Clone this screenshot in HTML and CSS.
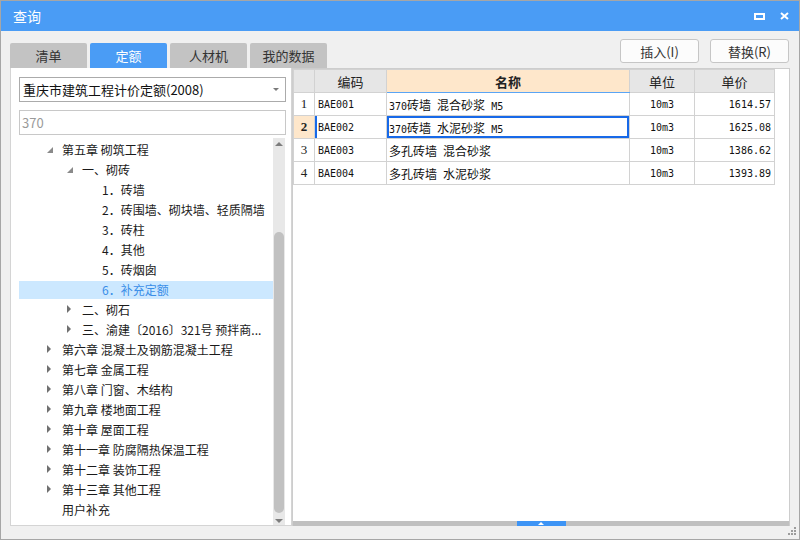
FILE: index.html
```html
<!DOCTYPE html>
<html lang="zh-CN">
<head>
<meta charset="utf-8">
<title>查询</title>
<link rel="stylesheet" href="styles.css">
</head>
<body>
<div class="window">
  <div class="titlebar">
    <span class="title">查询</span>
    <div class="win-btns">
      <svg class="ico-max" width="11" height="7" viewBox="0 0 11 7"><rect x="1" y="1" width="9" height="5" fill="none" stroke="#fff" stroke-width="2"/></svg>
      <svg class="ico-close" width="9" height="8" viewBox="0 0 9 8"><path d="M1 1L8 7M8 1L1 7" stroke="#fff" stroke-width="2" fill="none"/></svg>
    </div>
  </div>
  <div class="main">
    <div class="toprow">
      <div class="tabs">
        <div class="tab">清单</div>
        <div class="tab active">定额</div>
        <div class="tab">人材机</div>
        <div class="tab">我的数据</div>
      </div>
      <div class="actions">
        <button class="btn">插入(I)</button>
        <button class="btn">替换(R)</button>
      </div>
    </div>
    <div class="content">
      <div class="left">
        <div class="select"><span>重庆市建筑工程计价定额(2008)</span><span class="caret"></span></div>
        <div class="search">370</div>
        <div class="tree-wrap">
          <div class="tree">
            <div class="row l0"><span class="tog"><i class="open"></i></span>第五章 砌筑工程</div>
            <div class="row l1"><span class="tog"><i class="open"></i></span>一、砌砖</div>
            <div class="row l2"><span class="tog"></span>1．砖墙</div>
            <div class="row l2"><span class="tog"></span>2．砖围墙、砌块墙、轻质隔墙</div>
            <div class="row l2"><span class="tog"></span>3．砖柱</div>
            <div class="row l2"><span class="tog"></span>4．其他</div>
            <div class="row l2"><span class="tog"></span>5．砖烟囱</div>
            <div class="row l2 sel"><span class="tog"></span>6．补充定额</div>
            <div class="row l1"><span class="tog"><i class="closed"></i></span>二、砌石</div>
            <div class="row l1"><span class="tog"><i class="closed"></i></span>三、渝建〔2016〕321号 预拌商...</div>
            <div class="row l0"><span class="tog"><i class="closed"></i></span>第六章 混凝土及钢筋混凝土工程</div>
            <div class="row l0"><span class="tog"><i class="closed"></i></span>第七章 金属工程</div>
            <div class="row l0"><span class="tog"><i class="closed"></i></span>第八章 门窗、木结构</div>
            <div class="row l0"><span class="tog"><i class="closed"></i></span>第九章 楼地面工程</div>
            <div class="row l0"><span class="tog"><i class="closed"></i></span>第十章 屋面工程</div>
            <div class="row l0"><span class="tog"><i class="closed"></i></span>第十一章 防腐隔热保温工程</div>
            <div class="row l0"><span class="tog"><i class="closed"></i></span>第十二章 装饰工程</div>
            <div class="row l0"><span class="tog"><i class="closed"></i></span>第十三章 其他工程</div>
            <div class="row l0"><span class="tog"></span>用户补充</div>
          </div>
          <div class="vscroll">
            <span class="arrow-up"></span>
            <span class="thumb-v"></span>
            <span class="arrow-down"></span>
          </div>
        </div>
      </div>
      <div class="grid-panel">
        <table class="grid">
          <colgroup>
            <col class="c-rn"><col class="c-code"><col class="c-name"><col class="c-unit"><col class="c-price">
          </colgroup>
          <thead>
            <tr><th></th><th>编码</th><th class="name">名称</th><th>单位</th><th>单价</th></tr>
          </thead>
          <tbody>
            <tr><td class="rn">1</td><td class="code">BAE001</td><td class="nm"><span class="lt">370</span>砖墙<span class="lt"> </span>混合砂浆<span class="lt"> M5</span></td><td class="unit">10m3</td><td class="price">1614.57</td></tr>
            <tr class="cur"><td class="rn">2</td><td class="code">BAE002</td><td class="nm"><span class="lt">370</span>砖墙<span class="lt"> </span>水泥砂浆<span class="lt"> M5</span></td><td class="unit">10m3</td><td class="price">1625.08</td></tr>
            <tr><td class="rn">3</td><td class="code">BAE003</td><td class="nm">多孔砖墙<span class="lt"> </span>混合砂浆</td><td class="unit">10m3</td><td class="price">1386.62</td></tr>
            <tr><td class="rn">4</td><td class="code">BAE004</td><td class="nm">多孔砖墙<span class="lt"> </span>水泥砂浆</td><td class="unit">10m3</td><td class="price">1393.89</td></tr>
          </tbody>
        </table>
        <div class="spacer"></div>
        <div class="hscroll"><div class="hthumb"><span class="harrow"></span></div></div>
      </div>
    </div>
    <div class="footer">
      <svg class="grip" width="8" height="8" viewBox="0 0 8 8">
        <rect x="6" y="0" width="2" height="2" fill="#9c9c9c"/>
        <rect x="3" y="3" width="2" height="2" fill="#9c9c9c"/>
        <rect x="6" y="3" width="2" height="2" fill="#9c9c9c"/>
        <rect x="0" y="6" width="2" height="2" fill="#9c9c9c"/>
        <rect x="3" y="6" width="2" height="2" fill="#9c9c9c"/>
        <rect x="6" y="6" width="2" height="2" fill="#9c9c9c"/>
      </svg>
    </div>
  </div>
</div>
</body>
</html>
```
FILE: styles.css
```css
* { box-sizing: border-box; }
html, body { margin: 0; padding: 0; }
body {
  font-family: "Noto Sans CJK SC", "Microsoft YaHei", sans-serif;
  background: #f0f0f0;
}
.window {
  width: 800px;
  height: 540px;
  border: 1px solid #a6a6a6;
  background: #f0f0f0;
  display: flex;
  flex-direction: column;
}
.titlebar {
  height: 30px;
  flex: none;
  background: #4a9cf5;
  display: flex;
  align-items: center;
  padding: 0 10px 0 12px;
  color: #fff;
}
.title { font-size: 14px; flex: 1; }
.win-btns { display: flex; align-items: center; gap: 15px; }
.win-btns svg { display: block; }

.main {
  flex: 1;
  display: flex;
  flex-direction: column;
  padding: 0 9px;
}
.toprow {
  height: 37px;
  flex: none;
  display: flex;
  justify-content: space-between;
}
.tabs { display: flex; gap: 3px; align-self: flex-end; }
.tab {
  width: 77px;
  height: 25px;
  background: #c3c3c3;
  border-radius: 2px 2px 0 0;
  font-size: 13px;
  color: #333;
  display: flex;
  align-items: center;
  justify-content: center;
}
.tab.active { background: #4a9cf5; color: #fff; }
.actions { display: flex; gap: 11px; padding-top: 8px; margin-right: 1px; }
.btn {
  width: 79px;
  height: 24px;
  padding: 0;
  border: 1px solid #c6c6c6;
  border-radius: 3px;
  background: #fcfcfc;
  font-family: "Noto Sans CJK SC", sans-serif;
  font-size: 13px;
  color: #333;
  display: flex;
  align-items: center;
  justify-content: center;
}

.content { height: 458px; flex: none; display: flex; }
.left {
  width: 282px;
  flex: none;
  background: #fff;
  border: 1px solid #d4d4d4;
  border-top: none;
  display: flex;
  flex-direction: column;
  padding: 9px 5px 0 8px;
}
.select {
  height: 25px;
  flex: none;
  border: 1px solid #ababab;
  display: flex;
  align-items: center;
  justify-content: space-between;
  padding: 0 6px 0 3px;
  font-size: 13px;
  color: #111;
}
.caret {
  width: 0; height: 0;
  border-left: 3px solid transparent;
  border-right: 3px solid transparent;
  border-top: 3px solid #7a7a7a;
}
.search {
  height: 25px;
  flex: none;
  margin-top: 8px;
  border: 1px solid #c8c8c8;
  padding-left: 2px;
  font-size: 13px;
  color: #9a9a9a;
  display: flex;
  align-items: center;
}
.tree-wrap { flex: 1; margin-top: 3px; margin-right: 1px; display: flex; }
.tree { flex: 1; padding-top: 1px; overflow: hidden; }
.row {
  height: 20px;
  display: flex;
  align-items: center;
  font-size: 12px;
  color: #1a1a1a;
  white-space: nowrap;
}
.row.l0 { padding-left: 28px; }
.row.l1 { padding-left: 48px; }
.row.l2 { padding-left: 68px; }
.row.sel {
  background: linear-gradient(to bottom, transparent 2px, #cce8ff 2px);
  color: #3a8ee8;
}
.tog { width: 15px; flex: none; display: flex; align-items: center; }
.tog .open {
  width: 0; height: 0;
  border-right: 6px solid #8a8a8a;
  border-top: 6px solid transparent;
  margin-top: 1px;
}
.tog .closed {
  width: 0; height: 0;
  border-left: 4px solid #707070;
  border-top: 4px solid transparent;
  border-bottom: 4px solid transparent;
}
.vscroll {
  width: 12px;
  flex: none;
  background: #e8e8e8;
  display: flex;
  flex-direction: column;
  align-items: center;
}
.arrow-up {
  margin-top: 4px;
  width: 0; height: 0;
  border-left: 4px solid transparent;
  border-right: 4px solid transparent;
  border-bottom: 4px solid #7d7d7d;
}
.thumb-v {
  width: 10px;
  height: 281px;
  margin-top: 86px;
  background: #c1c1c1;
  border-radius: 5px;
}
.arrow-down {
  margin-top: 6px;
  width: 0; height: 0;
  border-left: 4px solid transparent;
  border-right: 4px solid transparent;
  border-top: 4px solid #7d7d7d;
}

.grid-panel {
  flex: 1;
  background: #fff;
  border: 1px solid #cdcdcd;
  border-bottom: none;
  display: flex;
  flex-direction: column;
}
.grid {
  width: 481px;
  table-layout: fixed;
  border-collapse: collapse;
}
.c-rn { width: 21px; }
.c-code { width: 72px; }
.c-name { width: 243px; }
.c-unit { width: 65px; }
.c-price { width: 80px; }
.grid th, .grid td {
  height: 23px;
  border: 1px solid #d2d2d2;
  padding: 0 2px;
  white-space: pre;
  overflow: hidden;
}
.grid th {
  background: #e6e6e6;
  font-size: 13px;
  font-weight: normal;
  color: #222;
  text-align: center;
}
.grid th.name {
  background: #fee7cb;
  font-weight: bold;
  border-bottom-color: #5aa5f5;
}
.grid td { font-size: 12px; color: #111; }
.grid td.rn {
  text-align: center;
  font-family: "Liberation Serif", serif;
  font-size: 13px;
  color: #222;
}
.grid td.code, .grid td.unit, .grid td.price, .grid .lt {
  font-family: "DejaVu Sans Mono", monospace;
  font-size: 10px;
}
.grid td.code { padding-left: 3px; }
.grid td.unit { text-align: center; }
.grid td.price { text-align: right; padding-right: 3px; }
.grid tr.cur td.rn { background: #fee7cb; font-weight: bold; }
.grid tr.cur td.code { box-shadow: inset 2px 0 0 #1769e8; }
.grid tr.cur td.nm { box-shadow: inset 0 0 0 2px #1769e8; }
.spacer { flex: 1; }
.hscroll {
  height: 5px;
  flex: none;
  background: #c0c0c0;
  display: flex;
  justify-content: center;
}
.hthumb {
  width: 49px;
  height: 5px;
  background: #3d94f5;
  display: flex;
  justify-content: center;
  align-items: center;
}
.harrow {
  width: 0; height: 0;
  border-left: 3px solid transparent;
  border-right: 3px solid transparent;
  border-bottom: 3px solid #fff;
}
.footer {
  flex: 1;
  display: flex;
  justify-content: flex-end;
  align-items: flex-start;
  padding-top: 1px;
  margin-right: -6px;
}
.grip { display: block; }
```
